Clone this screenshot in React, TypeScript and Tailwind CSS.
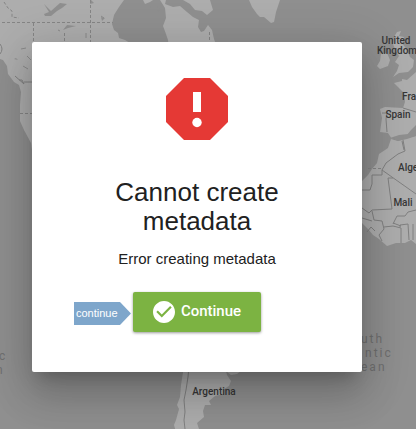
const land = [
  // Canada, west coast and Hudson Bay
  'M0 0H124L119 7L114 15L112 24L114 30L118 33L119 38L125 40L130 43V150H32L31 143L24 130L20 121V105L21 92L19 85L14 82L8 74L7 66L3 60L0 59Z',
  // Labrador
  'M160 0L165 8L166 18L163 26L166 34L168 40L169 50H218L214 39L212 30L208 25L204 31L201 32L198 27L199 20L193 17L187 12L180 6L173 7L165 4L166 0Z',
  'M143 0L145 4L150 2L153 0Z',
  'M183 0L190 4L195 10L202 11L207 15L213 10L210 0Z',
  // Greenland
  'M249 0L252 7L257 14L260 17L264 17L271 23L274 22L276 12L280 0Z',
  // British Isles
  'M397 32L401 31L399 36L404 37L402 43L407 50L410 57L414 60L413 67L408 72L399 73L393 77L397 71L399 65L395 62L399 56L396 51L393 44L394 37Z',
  'M381 53L387 53L390 60L388 66L380 69L377 66L380 61Z',
  // France and Spain
  'M394 83L402 81V79L407 80L416 72V125L411 130L407 135L399 137L392 139L388 133L380 132L382 118L380 109L385 107L403 108L405 102L404 93L398 87Z',
  // West Africa
  'M391 139L398 141L407 138L416 136V244L411 240L405 243L396 243L387 246L379 239L373 235L368 229L362 223V181L368 175L372 169L377 163L379 154L388 148Z',
  // South America
  'M184 366L181 385L180 397L177 405L179 409L176 420L174 425L176 432H200L197 423L204 417L203 411L205 405L211 405L209 401L215 396L223 394L224 389L229 386L231 381L227 375L225 366Z',
  'M227 372L231 375L237 374L241 371Z',
];

const lakes = [
  'M44 4L51 11L60 3L67 4L62 8L57 11L51 16L45 16L44 14L49 12Z',
  'M63 30L67 25L76 26L68 28Z',
  'M91 0L94 3L90 4Z',
  'M101 17L105 18L102 21Z',
  'M14 59L18 60L16 58Z',
  'M147 5L151 3L150 8Z',
  'M157 5L160 9L158 12Z',
  // Western Mediterranean
  'M390 138L399 135L408 134L416 130V136L407 139L398 141Z',
];

const borders = [
  'M15 76L24 84L22 80L19 80M24 82H32M0 44Q4 49 0 54',
  'M382 113H387L386 119L387 132M403 108L416 112M402 141L404 150',
  'M403 140L405 151L398 154L386 163L382 170L416 194M382 170V175H372V184L370 190H362',
  'M393 178H388L392 209L372 210L369 213L362 208M393 224L397 216L405 216L408 212L416 210',
  'M372 211L374 220L382 221L384 229L379 235L382 241M384 227L393 226L401 228V243M400 227V225L408 224L409 240M413 224V240M362 218L372 221M367 232L371 227L375 231M393 223L401 226',
  'M189 366L188 377L186 390L184 400L185 412L184 420L185 429',
];

function WorldMap() {
  return (
    <svg
      className="absolute inset-0 h-full w-full font-['Roboto',sans-serif]"
      viewBox="0 0 416 429"
      preserveAspectRatio="xMidYMid slice"
      aria-label="World map"
    >
      <rect width="416" height="429" fill="#8f8f8f" />
      {land.map((d) => (
        <path key={d} d={d} fill="#adadad" />
      ))}
      {lakes.map((d) => (
        <path key={d} d={d} fill="#8f8f8f" />
      ))}
      {borders.map((d) => (
        <path key={d} d={d} fill="none" stroke="#808080" strokeWidth="1" />
      ))}
      <path
        d="M2 22.5H113M33.5 23V42M64.5 33V42M90.5 0V42M20 113.5H32M368 168.5H382M4 2L8 8L12 11L12 17L19 18M209.5 60V32"
        fill="none"
        stroke="#858585"
        strokeDasharray="3 2"
      />
      <path d="M86 33V38M101 16L104 18M21 49L26 48M27 56L31 60M23 66L28 69M58 30L60 31" stroke="#8a8a8a" />
      <g fill="#363636" fontSize="10" fontWeight="500" textAnchor="middle">
        <text x="396" y="44">United</text>
        <text x="397" y="54">Kingdom</text>
        <text x="398" y="118">Spain</text>
        <text x="403" y="206">Mali</text>
        <text x="214" y="395">Argentina</text>
      </g>
      <g fill="#363636" fontSize="10" fontWeight="500">
        <text x="402" y="100">Fra</text>
        <text x="398" y="171">Alge</text>
      </g>
      <g fill="#6f6f6f" fontSize="12" letterSpacing="2">
        <text x="361" y="343">uth</text>
        <text x="365" y="357">ntic</text>
        <text x="361" y="371">ean</text>
      </g>
      <g fill="#6f6f6f" fontSize="12">
        <text x="-1" y="360">c</text>
        <text x="-4" y="374">n</text>
      </g>
    </svg>
  );
}

function ErrorIcon() {
  return (
    <svg className="size-[62px]" viewBox="0 0 62 62" aria-hidden="true">
      <path d="M18 0H44L62 18V44L44 62H18L0 44V18Z" fill="#e53935" />
      <path d="M27 14H35V34H27Z" fill="#fff" />
      <circle cx="31" cy="44.500" r="4.700" fill="#fff" />
    </svg>
  );
}

function CheckIcon() {
  return (
    <svg className="size-[22px]" viewBox="2 2 20 20" aria-hidden="true">
      <path
        fill="currentColor"
        d="M12 2C6.480 2 2 6.480 2 12s4.480 10 10 10 10-4.480 10-10S17.520 2 12 2zm-2 15l-5-5 1.410-1.410L10 14.170l7.590-7.590L19 8l-9 9z"
      />
    </svg>
  );
}

export default function App() {
  return (
    <main className="relative flex min-h-screen items-start justify-center overflow-hidden pt-[42px] pr-[54px] pb-14 pl-8 font-['Liberation_Sans',Arial,sans-serif]">
      <WorldMap />
      <section
        role="alertdialog"
        aria-labelledby="dialog-title"
        aria-describedby="dialog-message"
        className="relative flex w-full max-w-[330px] flex-col items-center rounded-xs bg-white px-16 pt-9 pb-10 text-center text-[#212121] shadow-[0_11px_15px_-7px_rgba(0,0,0,0.2),0_24px_38px_3px_rgba(0,0,0,0.14),0_9px_46px_8px_rgba(0,0,0,0.12)]"
      >
        <ErrorIcon />
        <h1 id="dialog-title" className="mt-[38px] text-[26px] leading-[29px]">
          Cannot create metadata
        </h1>
        <p id="dialog-message" className="mt-3 text-[15px] leading-[22px]">
          Error creating metadata
        </p>
        <div className="relative mt-[22px]">
          <button
            type="button"
            className="flex h-10 w-32 items-center justify-center gap-1.5 rounded-xs bg-[#7cb342] font-['Roboto',sans-serif] text-[15px] font-medium text-white shadow-[0_1px_3px_rgba(0,0,0,0.4)]"
          >
            <CheckIcon />
            <span className="pb-0.5">Continue</span>
          </button>
          <span className="absolute top-[10px] right-full mr-0.5 h-[23px] w-[57px] bg-[#7ea6cb] pl-0.5 text-left text-[11px] leading-[23px] text-white [clip-path:polygon(0_0,46px_0,100%_50%,46px_100%,0_100%)]">
            continue
          </span>
        </div>
      </section>
    </main>
  );
}
